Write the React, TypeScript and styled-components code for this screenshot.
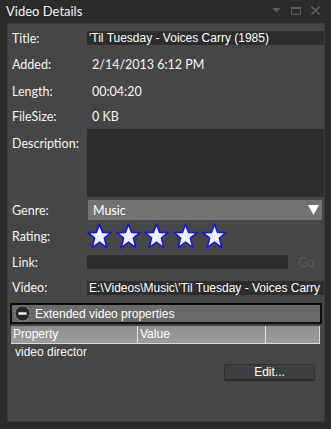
import React from 'react'
import styled, { createGlobalStyle } from 'styled-components'

const GlobalStyle = createGlobalStyle`
  html, body {
    margin: 0;
    padding: 0;
    background: #2b2b2b;
  }
`

const uiFont = `Lato, "Open Sans", sans-serif`
const boxFont = `"Liberation Sans", Arial, sans-serif`

const Window = styled.div`
  width: 331px;
  height: 429px;
  background: #2b2b2b;
  display: flex;
  flex-direction: column;
  box-sizing: border-box;
  padding: 0 6px 7px 7px;
  font-family: ${uiFont};
  color: #ffffff;
`

const TitleBar = styled.div`
  height: 23px;
  display: flex;
  align-items: center;
  justify-content: space-between;
  margin-left: -1px;
`

const TitleText = styled.span`
  font-size: 13px;
  color: #f2f2f2;
  margin-top: -2px;
`

const TitleIcons = styled.div`
  display: flex;
  align-items: center;
  gap: 10px;
  margin-right: 5px;
  margin-top: -2px;
`

const Panel = styled.div`
  flex: 1;
  background: #464646;
  border: 1px solid #3b3b3b;
  padding-top: 1px;
  display: flex;
  flex-direction: column;
`

interface RowProps {
  h: number
  top?: boolean
}

const Row = styled.div<RowProps>`
  height: ${p => p.h}px;
  display: flex;
  align-items: ${p => (p.top ? 'flex-start' : 'center')};
  flex-shrink: 0;
`

interface LabelProps {
  padTop?: number
}

const Label = styled.div<LabelProps>`
  width: 79px;
  flex-shrink: 0;
  padding-left: 4px;
  box-sizing: border-box;
  font-size: 12.5px;
  color: #f4f4f4;
  padding-top: ${p => p.padTop || 0}px;
`

const Value = styled.div`
  padding-left: 5px;
  font-size: 12.5px;
  color: #f4f4f4;
`

interface TextBoxProps {
  h?: number
}

const TextBox = styled.div<TextBoxProps>`
  flex: 1;
  height: ${p => p.h || 14}px;
  background: #2d2d2d;
  font-family: ${boxFont};
  font-size: 12px;
  line-height: 14px;
  padding-left: 2px;
  white-space: nowrap;
  overflow: hidden;
  color: #ffffff;
`

const Combo = styled.div`
  flex: 1;
  height: 20px;
  margin: 0 2px 0 1px;
  background: #727272;
  display: flex;
  align-items: center;
  justify-content: space-between;
  padding: 0 3px 0 5px;
  font-size: 12.5px;
`

const Stars = styled.div`
  display: flex;
  gap: 3.7px;
`

const GoText = styled.span`
  width: 36px;
  text-align: center;
  font-size: 12.5px;
  color: #5a5a5a;
`

const Expander = styled.div`
  height: 21px;
  margin: 0 2px 0 2px;
  box-sizing: border-box;
  background: #6a6a6a;
  border: 2px solid #0e0e0e;
  display: flex;
  align-items: center;
  gap: 4px;
  padding-left: 2px;
  font-family: ${boxFont};
  font-size: 12px;
  flex-shrink: 0;
`

const GridHeader = styled.div`
  height: 17px;
  margin: 2px 4px 0 3px;
  display: grid;
  grid-template-columns: 127px 128px 1fr;
  background: linear-gradient(#8e8e8e, #9e9e9e);
  border-right: 1px solid #d8d8d8;
  border-bottom: 1px solid #d8d8d8;
  flex-shrink: 0;
`

interface HeaderCellProps {
  last?: boolean
}

const HeaderCell = styled.div<HeaderCellProps>`
  border-right: ${p => (p.last ? 'none' : '1px solid #e4e4e4')};
  padding-left: 2px;
  font-family: ${boxFont};
  font-size: 12px;
  line-height: 16px;
  color: #ffffff;
`

const GridRow = styled.div`
  height: 16px;
  padding-left: 7px;
  font-family: ${boxFont};
  font-size: 12px;
  line-height: 16px;
  color: #f4f4f4;
  flex-shrink: 0;
`

const ButtonRow = styled.div`
  display: flex;
  justify-content: flex-end;
  padding: 4px 9px 0 0;
`

const EditButton = styled.button`
  width: 91px;
  height: 16px;
  padding: 0;
  background: #3c3f41;
  border: 1px solid #2e3031;
  border-radius: 2px;
  box-shadow: 0 1px 1px rgba(0, 0, 0, 0.45);
  color: #ffffff;
  font-family: ${boxFont};
  font-size: 12px;
  line-height: 14px;
`

const Star: React.FC = () => (
  <svg width="25" height="26" viewBox="0 0 25 26">
    <polygon
      points="12.5,1.2 15.6,9.4 24,9.6 17.4,15 19.8,24.6 12.5,19.2 5.2,24.6 7.6,15 1,9.6 9.4,9.4"
      fill="#f2f6ff"
      stroke="#1414e6"
      strokeWidth="1.6"
      strokeLinejoin="miter"
    />
  </svg>
)

const App: React.FC = (): JSX.Element => {
  return (
    <Window>
      <GlobalStyle />
      <TitleBar>
        <TitleText>Video Details</TitleText>
        <TitleIcons>
          <svg width="9" height="5" viewBox="0 0 9 5">
            <polygon points="0,0 9,0 4.5,4.5" fill="#5c5c5c" />
          </svg>
          <svg width="10" height="8" viewBox="0 0 10 8">
            <rect x="0.5" y="0.5" width="9" height="7" fill="none" stroke="#5c5c5c" />
            <rect x="0" y="0" width="10" height="2" fill="#5c5c5c" />
          </svg>
          <svg width="9" height="9" viewBox="0 0 9 9">
            <path d="M0.5 0.5 L8.5 8.5 M8.5 0.5 L0.5 8.5" stroke="#5c5c5c" strokeWidth="1.6" />
          </svg>
        </TitleIcons>
      </TitleBar>

      <Panel>
        <Row h={26}>
          <Label>Title:</Label>
          <TextBox>'Til Tuesday - Voices Carry (1985)</TextBox>
        </Row>
        <Row h={27}>
          <Label>Added:</Label>
          <Value>2/14/2013 6:12 PM</Value>
        </Row>
        <Row h={26}>
          <Label>Length:</Label>
          <Value>00:04:20</Value>
        </Row>
        <Row h={25}>
          <Label>FileSize:</Label>
          <Value>0 KB</Value>
        </Row>
        <Row h={71} top>
          <Label padTop={7}>Description:</Label>
          <TextBox h={68} />
        </Row>
        <Row h={20}>
          <Label>Genre:</Label>
          <Combo>
            <span>Music</span>
            <svg width="11" height="10" viewBox="0 0 11 10">
              <polygon points="0,0 11,0 5.5,10" fill="#ffffff" />
            </svg>
          </Combo>
        </Row>
        <Row h={32}>
          <Label>Rating:</Label>
          <Stars>
            {[0, 1, 2, 3, 4].map(i => (
              <Star key={i} />
            ))}
          </Stars>
        </Row>
        <Row h={20}>
          <Label>Link:</Label>
          <TextBox />
          <GoText>Go</GoText>
        </Row>
        <Row h={31}>
          <Label>Video:</Label>
          <TextBox>E:\Videos\Music\'Til Tuesday - Voices Carry</TextBox>
        </Row>

        <Expander>
          <svg width="17" height="17" viewBox="0 0 17 17">
            <circle cx="8.5" cy="8.5" r="7.6" fill="#2a2a2a" stroke="#8a8a8a" strokeWidth="1" />
            <rect x="4.5" y="7.3" width="8" height="2.4" fill="#ffffff" />
          </svg>
          <span>Extended video properties</span>
        </Expander>

        <GridHeader>
          <HeaderCell>Property</HeaderCell>
          <HeaderCell>Value</HeaderCell>
          <HeaderCell last />
        </GridHeader>
        <GridRow>video director</GridRow>

        <ButtonRow>
          <EditButton>Edit...</EditButton>
        </ButtonRow>
      </Panel>
    </Window>
  )
}

export default App
